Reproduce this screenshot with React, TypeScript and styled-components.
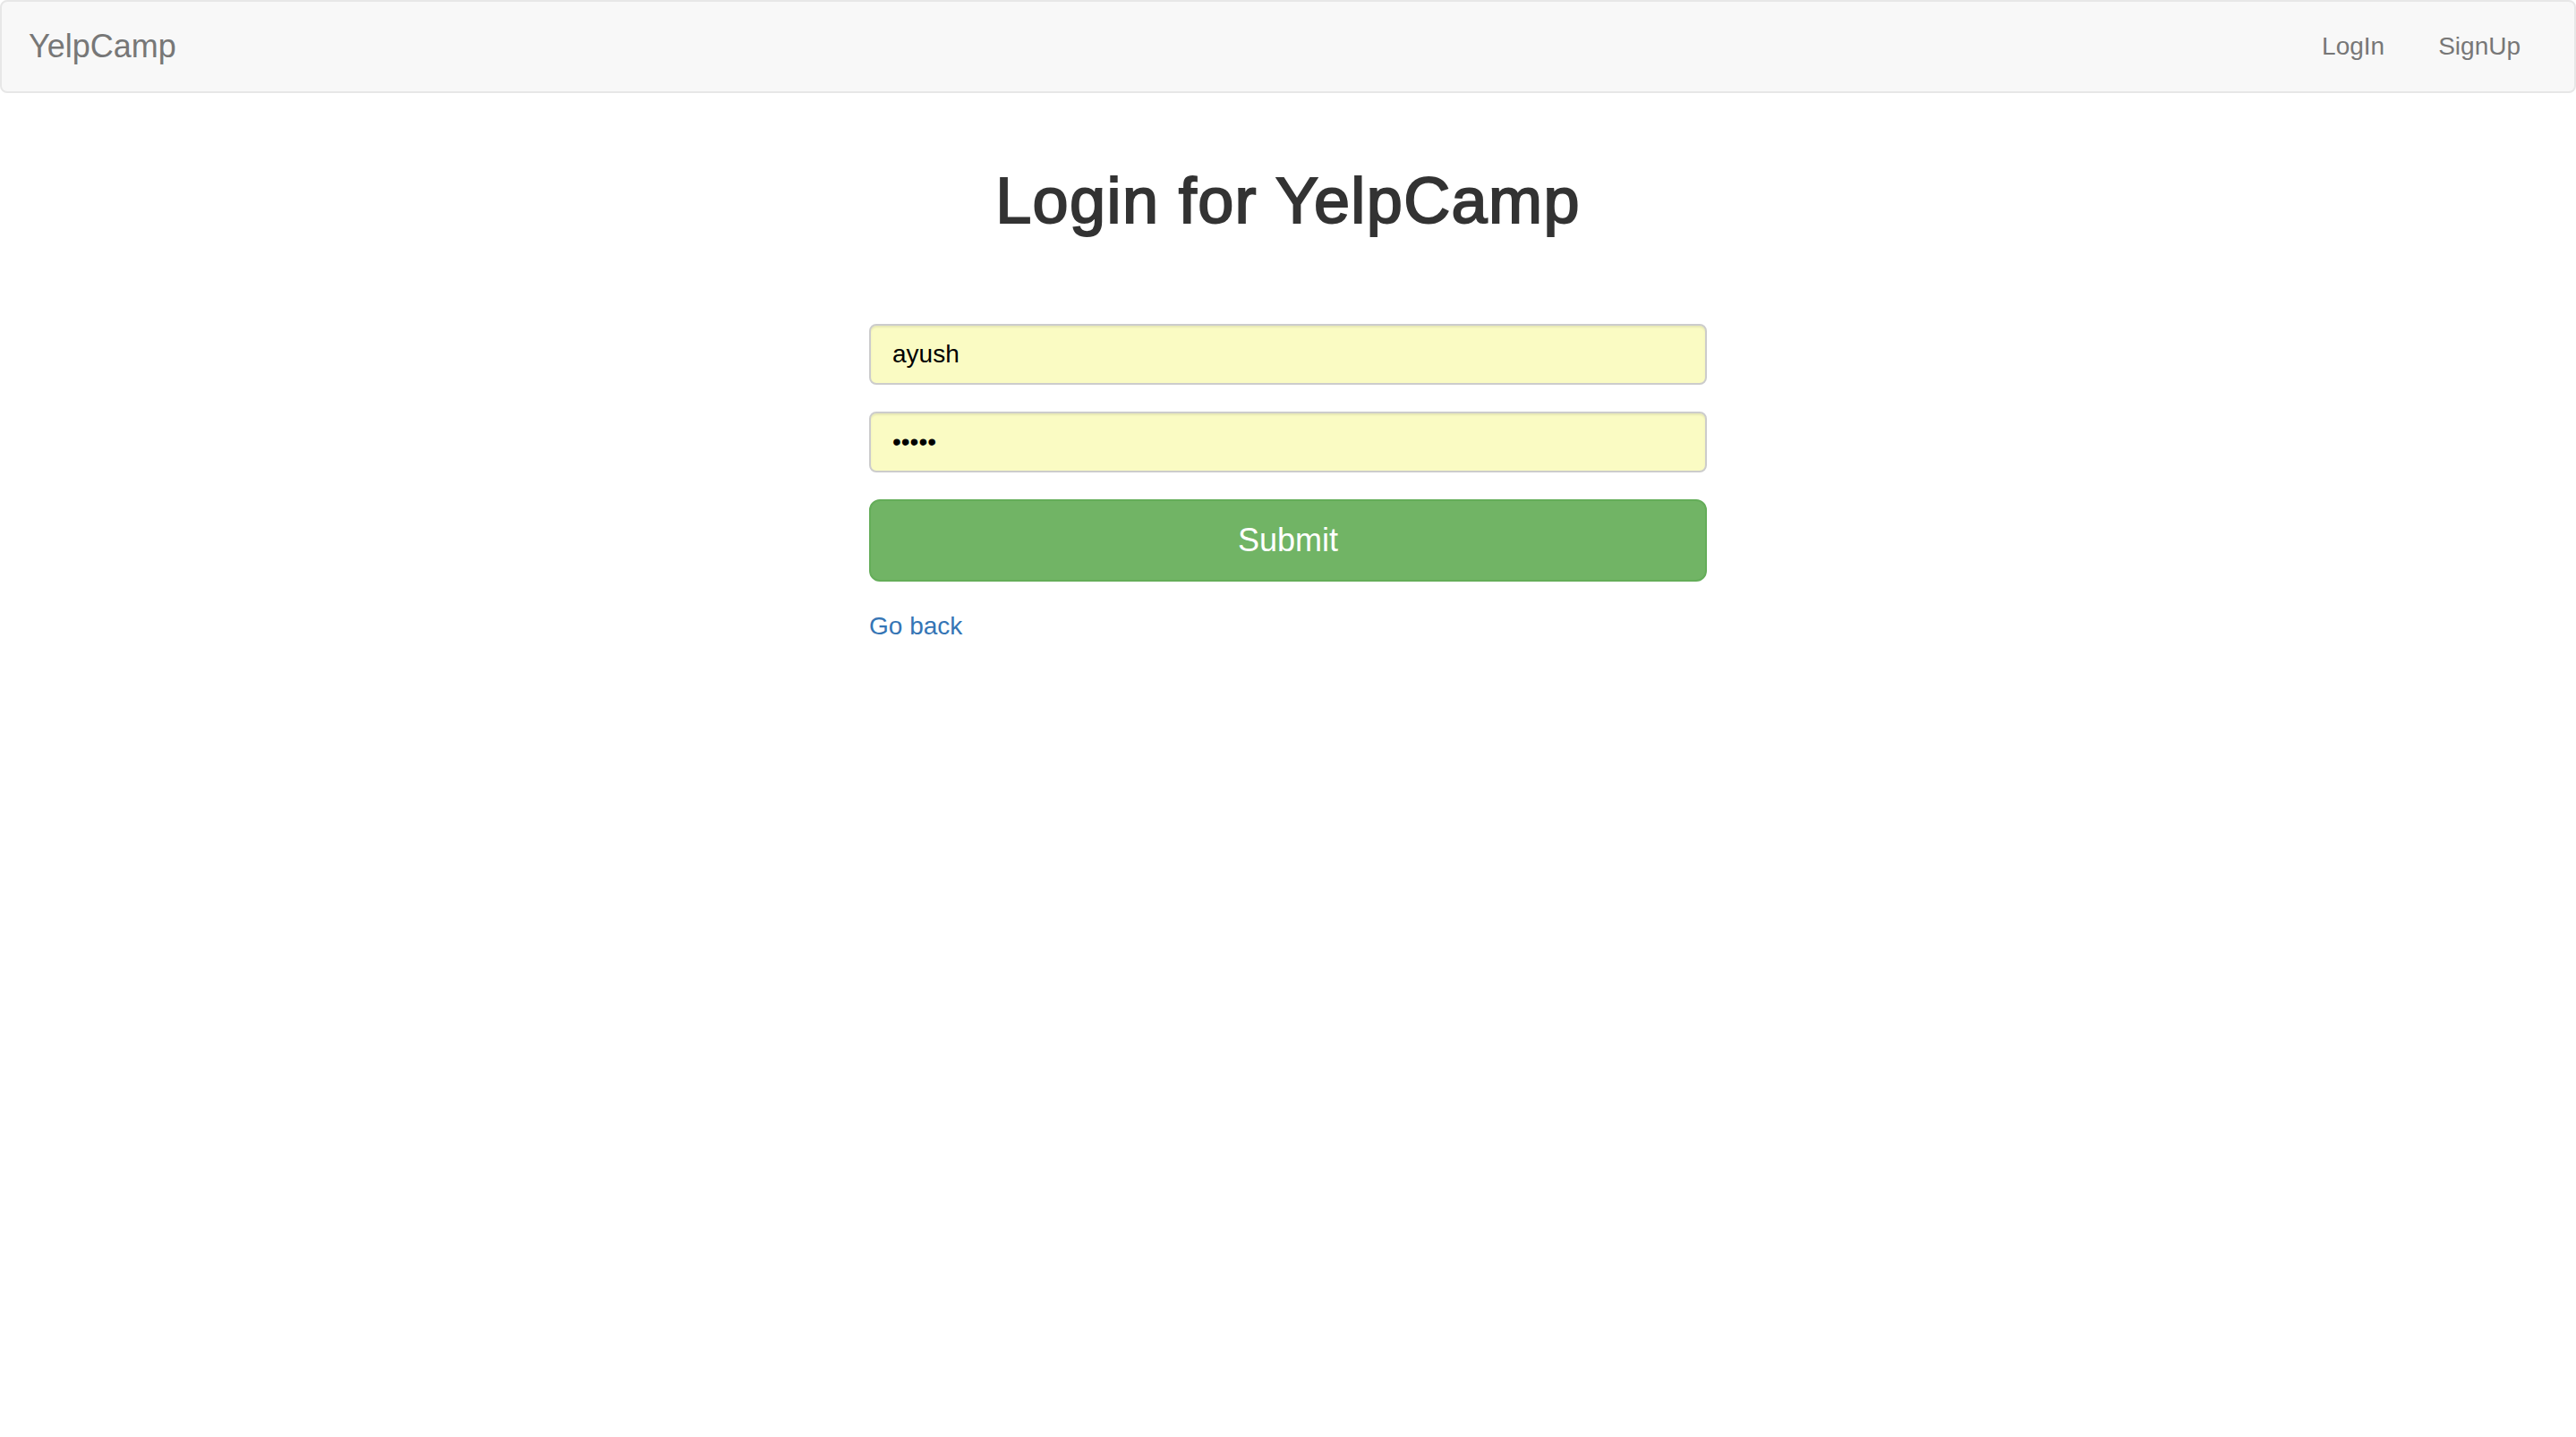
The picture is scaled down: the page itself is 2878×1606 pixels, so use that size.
import styled, { createGlobalStyle } from "styled-components";

const GlobalStyle = createGlobalStyle`
  html, body {
    margin: 0;
    padding: 0;
    background: #fff;
  }
  body {
    font-family: "Liberation Sans", Arial, Helvetica, sans-serif;
    font-size: 28px;
    line-height: 40px;
    color: #333;
  }
  * {
    box-sizing: border-box;
  }
`;

const Navbar = styled.nav`
  display: flex;
  align-items: center;
  justify-content: space-between;
  height: 104px;
  padding: 0 30px;
  background-color: #f8f8f8;
  border: 2px solid #e7e7e7;
  border-radius: 8px;
`;

const Brand = styled.a`
  padding: 30px 0;
  font-size: 36px;
  line-height: 40px;
  color: #777;
  text-decoration: none;
`;

const NavList = styled.ul`
  display: flex;
  margin: 0;
  padding: 0;
  list-style: none;
`;

const NavLink = styled.a`
  display: block;
  padding: 30px;
  font-size: 28px;
  line-height: 40px;
  color: #777;
  text-decoration: none;
`;

// medium weight: regular face thickened a little
const Heading = styled.h1`
  margin: 81px 0 98px;
  font-size: 72px;
  line-height: 79px;
  font-weight: 400;
  letter-spacing: 1.4px;
  -webkit-text-stroke: 2px #333;
  text-align: center;
  color: #333;
`;

const Panel = styled.div`
  display: flex;
  flex-direction: column;
  gap: 30px;
  width: 936px;
  margin: 0 auto;
`;

const Form = styled.form`
  display: flex;
  flex-direction: column;
  gap: 30px;
  margin: 0;
`;

const Field = styled.input`
  width: 100%;
  height: 68px;
  padding: 12px 24px;
  font-family: inherit;
  font-size: 28px;
  line-height: 40px;
  color: #000;
  background-color: #fafbc3;
  border: 2px solid #ccc;
  border-radius: 8px;
  box-shadow: inset 0 2px 2px rgba(0, 0, 0, 0.075);
  outline: none;
`;

const SubmitButton = styled.button`
  width: 100%;
  height: 92px;
  padding: 20px 32px;
  font-family: inherit;
  font-size: 36px;
  line-height: 48px;
  color: #fff;
  background-color: #71b465;
  border: 2px solid #64ad59;
  border-radius: 12px;
  cursor: pointer;
`;

const BackLink = styled.a`
  align-self: flex-start;
  font-size: 28px;
  line-height: 40px;
  color: #3575b5;
  text-decoration: none;
`;

export default function App() {
  return (
    <>
      <GlobalStyle />
      <Navbar>
        <Brand href="#">YelpCamp</Brand>
        <NavList>
          <li>
            <NavLink href="#">LogIn</NavLink>
          </li>
          <li>
            <NavLink href="#">SignUp</NavLink>
          </li>
        </NavList>
      </Navbar>
      <Heading>Login for YelpCamp</Heading>
      <Panel>
        <Form onSubmit={(e) => e.preventDefault()}>
          <Field type="text" name="username" value="ayush" readOnly />
          <Field type="password" name="password" value="ayush" readOnly />
          <SubmitButton type="submit">Submit</SubmitButton>
        </Form>
        <BackLink href="#">Go back</BackLink>
      </Panel>
    </>
  );
}
